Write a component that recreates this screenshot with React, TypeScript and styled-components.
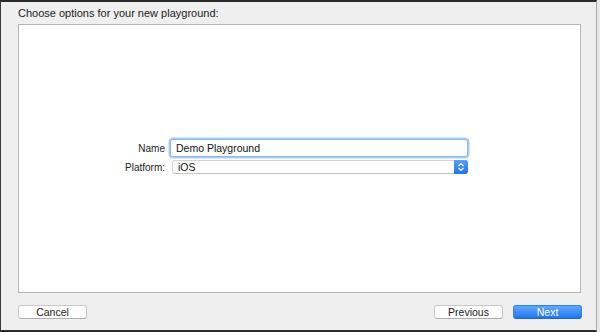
import React from "react"
import styled, { createGlobalStyle } from "styled-components"

const GlobalStyle = createGlobalStyle`
  html, body {
    margin: 0;
    padding: 0;
    background: #e9e9e9;
  }
  body {
    font-family: "Liberation Sans", Arial, sans-serif;
  }
`

const Window = styled.div`
  display: flex;
  flex-direction: column;
  box-sizing: border-box;
  width: 597px;
  height: 332px;
  background-color: #efefef;
  border-top: 2px solid #2b2b2b;
  border-left: 1px solid #3a3a3a;
  border-right: 1px solid #a8a8a8;
  border-bottom: 2px solid #2b2b2b;
`

const Header = styled.div`
  height: 22px;
  display: flex;
  align-items: center;
  padding-left: 17px;
  font-size: 11px;
  color: #222;
`

const Panel = styled.div`
  flex: 1;
  display: flex;
  align-items: center;
  justify-content: center;
  margin: 0 15px 0 17px;
  padding-right: 6px;
  background-color: #fff;
  border: 1px solid #b4b4b4;
`

const Form = styled.div`
  display: grid;
  grid-template-columns: auto 298px;
  column-gap: 5px;
  row-gap: 3px;
  align-items: center;
  margin-top: -4px;
`

const Label = styled.label`
  font-size: 10px;
  color: #222;
  text-align: right;
`

const TextField = styled.div`
  box-sizing: border-box;
  height: 18px;
  display: flex;
  align-items: center;
  padding-left: 5px;
  font-size: 10.5px;
  color: #111;
  background: #fff;
  border: 1px solid #8fb9ea;
  border-radius: 3px;
  box-shadow: 0 0 0 1.5px #a9cdf6;
`

const Select = styled.div`
  box-sizing: border-box;
  height: 14px;
  display: flex;
  align-items: center;
  justify-content: space-between;
  margin-left: 2px;
  padding-left: 5px;
  font-size: 10.5px;
  color: #111;
  background: #fff;
  border: 1px solid #d4d4d4;
  border-bottom-color: #c4c4c4;
  border-radius: 3px;
`

const Stepper = styled.span`
  width: 14px;
  height: 14px;
  margin-right: -1px;
  display: flex;
  align-items: center;
  justify-content: center;
  border-radius: 0 3px 3px 0;
  background: linear-gradient(#59a2f9, #1d73ef);
`

const Footer = styled.div`
  height: 37px;
  display: flex;
  align-items: flex-start;
  padding: 12px 14px 0 17px;
  box-sizing: border-box;
`

const Spacer = styled.div`
  flex: 1;
`

const Button = styled.button<{ $primary?: boolean }>`
  box-sizing: border-box;
  width: 69px;
  height: 14px;
  margin-left: ${(p) => (p.$primary ? "10px" : "0")};
  padding: 0;
  font-family: "Liberation Sans", Arial, sans-serif;
  font-size: 10.5px;
  line-height: 12px;
  color: ${(p) => (p.$primary ? "#fff" : "#222")};
  background: ${(p) =>
    p.$primary ? "linear-gradient(#62a8fb, #2077f0)" : "#fff"};
  border: 1px solid ${(p) => (p.$primary ? "#2f7fe9" : "#c8c8c8")};
  border-bottom-color: ${(p) => (p.$primary ? "#1c64d8" : "#aeaeae")};
  border-radius: 3px;
`

const App: React.FC = () => (
  <>
    <GlobalStyle />
    <Window>
      <Header>Choose options for your new playground:</Header>
      <Panel>
        <Form>
          <Label>Name</Label>
          <TextField>Demo Playground</TextField>
          <Label>Platform:</Label>
          <Select>
            iOS
            <Stepper>
              <svg width="8" height="10" viewBox="0 0 8 10">
                <path
                  d="M1.5 4 L4 1.5 L6.5 4 M1.5 6 L4 8.5 L6.5 6"
                  fill="none"
                  stroke="#fff"
                  strokeWidth="1.2"
                />
              </svg>
            </Stepper>
          </Select>
        </Form>
      </Panel>
      <Footer>
        <Button>Cancel</Button>
        <Spacer />
        <Button>Previous</Button>
        <Button $primary>Next</Button>
      </Footer>
    </Window>
  </>
)

export default App
